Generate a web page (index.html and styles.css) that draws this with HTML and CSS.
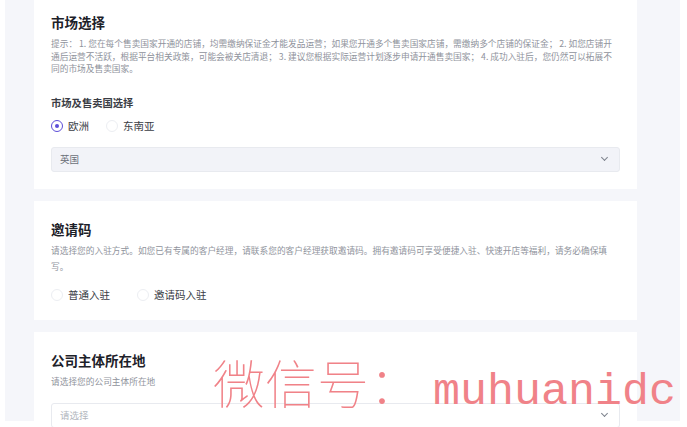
FILE: index.html
```html
<!DOCTYPE html>
<html lang="zh-CN">
<head>
    <meta charset="UTF-8">
    <meta name="viewport" content="width=device-width, initial-scale=1.0">
    <title>入驻申请</title>
    <link rel="stylesheet" href="styles.css">
</head>
<body>
    <div class="page">
        <!-- 市场选择 -->
        <div class="card card-first">
            <h2 class="card-title">市场选择</h2>
            <p class="hint">提示： 1. 您在每个售卖国家开通的店铺，均需缴纳保证金才能发品运营；如果您开通多个售卖国家店铺，需缴纳多个店铺的保证金； 2. 如您店铺开通后运营不活跃，根据平台相关政策，可能会被关店清退； 3. 建议您根据实际运营计划逐步申请开通售卖国家； 4. 成功入驻后，您仍然可以拓展不同的市场及售卖国家。</p>

            <h3 class="sub-title">市场及售卖国选择</h3>
            <div class="radio-group">
                <label class="radio checked"><span class="dot"></span>欧洲</label>
                <label class="radio"><span class="dot"></span>东南亚</label>
            </div>
            <div class="select filled">
                <span>英国</span>
                <span class="chevron"></span>
            </div>
        </div>

        <!-- 邀请码 -->
        <div class="card">
            <h2 class="card-title">邀请码</h2>
            <p class="desc desc-tall">请选择您的入驻方式。如您已有专属的客户经理，请联系您的客户经理获取邀请码。拥有邀请码可享受便捷入驻、快速开店等福利，请务必确保填写。</p>
            <div class="radio-group wide">
                <label class="radio"><span class="dot"></span>普通入驻</label>
                <label class="radio"><span class="dot"></span>邀请码入驻</label>
            </div>
        </div>

        <!-- 公司主体所在地 -->
        <div class="card">
            <h2 class="card-title">公司主体所在地</h2>
            <p class="desc">请选择您的公司主体所在地</p>
            <div class="select empty">
                <span>请选择</span>
                <span class="chevron"></span>
            </div>
        </div>
    </div>

    <div class="watermark"><span class="wm-cjk">微信号：</span><span class="wm-latin">muhuanidc</span></div>
</body>
</html>
```

FILE: styles.css
```css
body {
    margin: 0;
    background-color: #fff;
    font-family: "Noto Sans CJK SC", "Noto Sans", sans-serif;
    color: #1d2129;
    overflow: hidden;
    height: 427px;
}
.page {
    margin: 0 7px 0 5px;
    padding: 0 43px 0 29px;
    background-color: #f5f6fa;
    height: 427px;
}
.card {
    background-color: #fff;
    padding: 19px 17px 17px;
    margin-bottom: 12px;
}
.card-first {
    margin-top: -6px;
}
.card-title {
    margin: 0;
    font-size: 13.5px;
    line-height: 18px;
    font-weight: 700;
}
.hint {
    margin: 7px 0 0;
    font-size: 8.7px;
    line-height: 12.5px;
    color: #8f939c;
}
.desc {
    margin: 6px 0 0;
    font-size: 8.7px;
    line-height: 14px;
    color: #8f939c;
}
.desc-tall {
    margin-top: 5px;
    line-height: 16px;
}
.sub-title {
    margin: 20px 0 0;
    font-size: 10.3px;
    line-height: 14px;
    font-weight: 700;
    color: #3a3d45;
}
.radio-group {
    display: flex;
    gap: 17px;
    margin-top: 8px;
    height: 16px;
    align-items: center;
}
.desc-tall + .radio-group {
    margin-top: 12px;
}
.radio-group.wide {
    gap: 27px;
}
.radio {
    display: flex;
    align-items: center;
    gap: 5px;
    font-size: 10.5px;
    color: #3a3d45;
}
.dot {
    width: 10px;
    height: 10px;
    border: 1px solid #eceef2;
    border-radius: 50%;
    box-sizing: content-box;
    display: inline-block;
    position: relative;
}
.radio.checked .dot {
    border-color: #5d4ed8;
}
.radio.checked .dot::after {
    content: "";
    position: absolute;
    left: 3px;
    top: 3px;
    width: 4px;
    height: 4px;
    border-radius: 50%;
    background-color: #5d4ed8;
}
.select {
    margin-top: 13px;
    height: 25px;
    box-sizing: border-box;
    border: 1px solid #e8eaef;
    border-radius: 3px;
    display: flex;
    align-items: center;
    justify-content: space-between;
    padding: 0 12px 0 8px;
    font-size: 9.5px;
}
.select.filled {
    background-color: #f2f3f8;
    color: #6b7079;
}
.select.empty {
    margin-top: 14px;
    background-color: #fff;
    color: #b3b7c0;
}
.chevron {
    width: 4px;
    height: 4px;
    border-right: 1px solid #7d828c;
    border-bottom: 1px solid #7d828c;
    transform: rotate(45deg);
    margin-top: -3px;
}
.watermark {
    position: absolute;
    left: 213px;
    top: 352px;
    color: #f08288;
    white-space: nowrap;
    line-height: 60px;
}
.wm-cjk {
    font-family: "Noto Sans CJK SC", sans-serif;
    font-weight: 100;
    font-size: 52px;
}
.wm-latin {
    font-family: "Liberation Mono", monospace;
    font-size: 45px;
    margin-left: 12px;
}
```
